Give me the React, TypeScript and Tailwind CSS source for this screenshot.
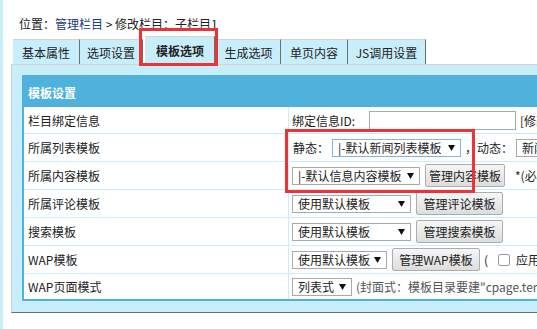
import React from "react";

const LINE = "border-[#c8eefb]";

function Sel({ className, text, focus }: { className: string; text: string; focus?: boolean }) {
  return (
    <div
      className={`flex h-[18px] shrink-0 items-center justify-between border bg-white pl-[5px] pr-[5px] ${
        focus ? "border-[#7eb4ea]" : "border-[#a9a9a9]"
      } ${className}`}
    >
      <span className="overflow-hidden whitespace-nowrap">{text}</span>
      <svg width="7" height="6" viewBox="0 0 7 6" className="shrink-0">
        <polygon points="0,0 7,0 3.5,6" fill="#111" />
      </svg>
    </div>
  );
}

function Btn({ className, children }: { className: string; children: React.ReactNode }) {
  return (
    <div
      className={`flex h-[23px] shrink-0 items-center justify-center rounded-[2px] border border-[#adadad] bg-linear-to-b from-[#f6f6f6] to-[#dddddd] ${className}`}
    >
      {children}
    </div>
  );
}

function Row({ label, children, h = "h-[28px]", last }: { label: string; children: React.ReactNode; h?: string; last?: boolean }) {
  return (
    <div className={`flex ${h} ${last ? "" : `border-b ${LINE}`}`}>
      <div className={`flex w-[265px] shrink-0 items-center border-r pl-[4px] ${LINE}`}>{label}</div>
      <div className="flex items-center whitespace-nowrap pl-[3px]">{children}</div>
    </div>
  );
}

const tabs = [
  { name: "基本属性", w: "w-[67px]" },
  { name: "选项设置", w: "w-[63px]" },
];
const tabs2 = [
  { name: "生成选项", w: "w-[64px]" },
  { name: "单页内容", w: "w-[67px]" },
  { name: "JS调用设置", w: "w-[78px]" },
];

export default function App() {
  return (
    <div className="relative h-[329px] w-[537px] overflow-hidden border-l-[3px] border-[#c8eefb] bg-white font-['Noto_Sans_CJK_SC','Microsoft_YaHei',sans-serif] text-[12px] leading-[17px] text-[#222]">
      <div className="w-[640px] pl-[8px]">
        {/* breadcrumb */}
        <div className="pl-[8px] pt-[14px] leading-[20px]">
          位置：<span className="text-[#1b3a85]">管理栏目</span> &gt; 修改栏目：子栏目1
        </div>

        {/* tabs */}
        <div className="relative z-10 mt-[1px] flex h-[29px] items-end pl-[2px]">
          {tabs.map((t) => (
            <div
              key={t.name}
              className={`flex h-[25px] items-center justify-center border-t border-r border-t-[#d4d4d4] border-r-[#6e6e6e] bg-[#c8eefb] ${t.w}`}
            >
              {t.name}
            </div>
          ))}
          <div className="ml-[2px] flex h-[29px] w-[70px] translate-y-[1px] justify-center border-t border-r border-l border-t-[#d4d4d4] border-r-[#6e6e6e] border-l-[#e4e4e4] bg-[#c8eefb] pt-[5px] font-bold">
            模板选项
          </div>
          <div className="w-[2px]" />
          {tabs2.map((t) => (
            <div
              key={t.name}
              className={`flex h-[25px] items-center justify-center border-t border-r border-t-[#d4d4d4] border-r-[#6e6e6e] bg-[#c8eefb] ${t.w}`}
            >
              {t.name}
            </div>
          ))}
        </div>

        {/* panel */}
        <div className="border-t border-l border-b border-t-[#d4d4d4] border-l-[#d0d0d0] border-b-[#6a6a6a] bg-[#c8eefb] pt-[10px] pb-[11px] pl-[10px]">
          <div className="border-2 border-[#4fb2dc] bg-white">
            <div className="flex h-[30px] items-center bg-[#4fb2dc] pl-[4px] font-bold text-white">模板设置</div>

            <Row label="栏目绑定信息" h="h-[27px]">
              <span className="w-[77px] shrink-0">绑定信息ID:</span>
              <div className="h-[19px] w-[147px] shrink-0 border border-[#a9a9a9] bg-white" />
              <span className="ml-[4px]">[修改绑定]</span>
            </Row>

            <Row label="所属列表模板">
              <span className="w-[40px] shrink-0 pl-[1px]">静态：</span>
              <Sel className="w-[129px]" text="|-默认新闻列表模板" focus />
              <span className="w-[16px] shrink-0 pl-[4px]">，</span>
              <span className="w-[39px] shrink-0">动态：</span>
              <Sel className="w-[120px]" text="新闻列表模板" />
            </Row>

            <Row label="所属内容模板">
              <Sel className="w-[128px]" text="|-默认信息内容模板" />
              <Btn className="ml-[5px] w-[80px]">管理内容模板</Btn>
              <span className="ml-[10px]">*(必填)</span>
            </Row>

            <Row label="所属评论模板">
              <Sel className="w-[119px]" text="使用默认模板" />
              <Btn className="ml-[5px] w-[87px]">管理评论模板</Btn>
            </Row>

            <Row label="搜索模板">
              <Sel className="w-[119px]" text="使用默认模板" />
              <Btn className="ml-[5px] w-[87px]">管理搜索模板</Btn>
            </Row>

            <Row label="WAP模板">
              <Sel className="w-[95px]" text="使用默认模板" />
              <Btn className="ml-[5px] w-[88px]">管理WAP模板</Btn>
              <span className="ml-[4px] w-[14px] shrink-0">(</span>
              <div className="h-[12px] w-[12px] shrink-0 rounded-[2px] border border-[#9a9a9a] bg-white" />
              <span className="ml-[6px]">应用到子栏目)</span>
            </Row>

            <Row label="WAP页面模式" h="h-[25px]" last>
              <Sel className="w-[60px]" text="列表式" />
              <span className="ml-[4px] text-[#555]">(封面式：模板目录要建"cpage.templet"文件)</span>
            </Row>
          </div>
        </div>
      </div>

      {/* red annotation boxes */}
      <div className="absolute left-[136px] top-[28px] z-20 h-[38px] w-[79px] border-[3px] border-[#ee3338]" />
      <div className="absolute left-[282px] top-[129px] z-20 h-[64px] w-[190px] border-[3px] border-[#ee3338]" />
    </div>
  );
}
